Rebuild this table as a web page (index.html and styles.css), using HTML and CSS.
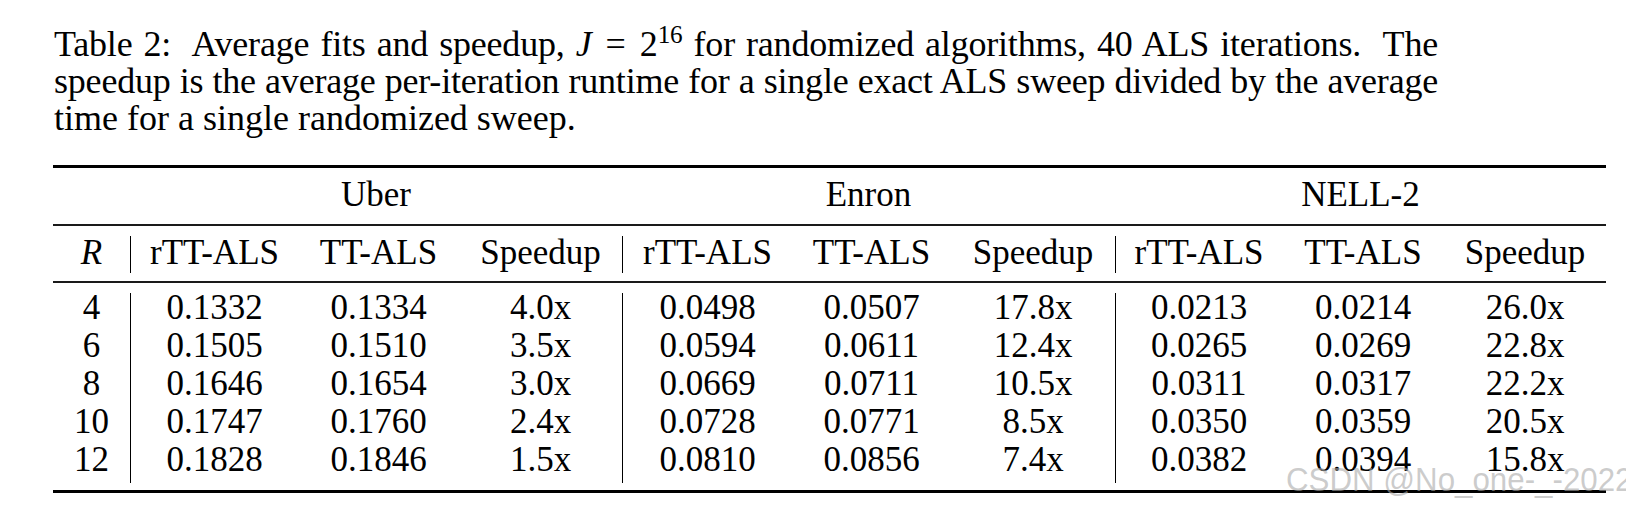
FILE: index.html
```html
<!DOCTYPE html>
<html lang="en">
<head>
<meta charset="utf-8">
<title>Table 2</title>
<link rel="stylesheet" href="styles.css">
</head>
<body>
<div class="page">
  <div class="caption">
    <div class="line">Table 2:&nbsp; Average fits and speedup, <span class="math">J</span> <span class="op">=</span> 2<sup class="sup">16</sup> for randomized algorithms, 40 ALS iterations.&nbsp; The</div>
    <div class="line">speedup is the average per-iteration runtime for a single exact ALS sweep divided by the average</div>
    <div class="line last">time for a single randomized sweep.</div>
  </div>

  <div class="table">
    <div class="rule heavy"></div>

    <div class="cell group"></div>
    <div class="cell group span3">Uber</div>
    <div class="cell group span3">Enron</div>
    <div class="cell group span3">NELL-2</div>

    <div class="rule light after-group"></div>

    <div class="cell head"><span class="math">R</span></div>
    <div class="cell head sep">rTT-ALS</div>
    <div class="cell head">TT-ALS</div>
    <div class="cell head">Speedup</div>
    <div class="cell head sep">rTT-ALS</div>
    <div class="cell head">TT-ALS</div>
    <div class="cell head">Speedup</div>
    <div class="cell head sep">rTT-ALS</div>
    <div class="cell head">TT-ALS</div>
    <div class="cell head">Speedup</div>

    <div class="rule light after-head"></div>

    <div class="cell data">4</div>
    <div class="cell data sep">0.1332</div>
    <div class="cell data">0.1334</div>
    <div class="cell data">4.0x</div>
    <div class="cell data sep">0.0498</div>
    <div class="cell data">0.0507</div>
    <div class="cell data">17.8x</div>
    <div class="cell data sep">0.0213</div>
    <div class="cell data">0.0214</div>
    <div class="cell data">26.0x</div>

    <div class="cell data">6</div>
    <div class="cell data sep">0.1505</div>
    <div class="cell data">0.1510</div>
    <div class="cell data">3.5x</div>
    <div class="cell data sep">0.0594</div>
    <div class="cell data">0.0611</div>
    <div class="cell data">12.4x</div>
    <div class="cell data sep">0.0265</div>
    <div class="cell data">0.0269</div>
    <div class="cell data">22.8x</div>

    <div class="cell data">8</div>
    <div class="cell data sep">0.1646</div>
    <div class="cell data">0.1654</div>
    <div class="cell data">3.0x</div>
    <div class="cell data sep">0.0669</div>
    <div class="cell data">0.0711</div>
    <div class="cell data">10.5x</div>
    <div class="cell data sep">0.0311</div>
    <div class="cell data">0.0317</div>
    <div class="cell data">22.2x</div>

    <div class="cell data">10</div>
    <div class="cell data sep">0.1747</div>
    <div class="cell data">0.1760</div>
    <div class="cell data">2.4x</div>
    <div class="cell data sep">0.0728</div>
    <div class="cell data">0.0771</div>
    <div class="cell data">8.5x</div>
    <div class="cell data sep">0.0350</div>
    <div class="cell data">0.0359</div>
    <div class="cell data">20.5x</div>

    <div class="cell data">12</div>
    <div class="cell data sep">0.1828</div>
    <div class="cell data">0.1846</div>
    <div class="cell data">1.5x</div>
    <div class="cell data sep">0.0810</div>
    <div class="cell data">0.0856</div>
    <div class="cell data">7.4x</div>
    <div class="cell data sep">0.0382</div>
    <div class="cell data">0.0394</div>
    <div class="cell data">15.8x</div>

    <div class="rule heavy bottom"></div>
  </div>

  <div class="watermark">CSDN @No_one-_-2022</div>
</div>
</body>
</html>
```

FILE: styles.css
```css
html, body {
  margin: 0;
  padding: 0;
  background: #ffffff;
  overflow: hidden;
}

.page {
  position: relative;
  width: 1626px;
  height: 510px;
  box-sizing: border-box;
  padding: 26px 0 0 53px;
  font-family: "Liberation Serif", "Times New Roman", serif;
  color: #000000;
}

.caption {
  width: 1384px;
  margin-left: 1px;
  font-size: 36px;
  line-height: 37px;
}

.caption .line {
  white-space: nowrap;
  text-align: justify;
  text-align-last: justify;
  letter-spacing: -0.2px;
}

.caption .line.last {
  text-align-last: left;
  letter-spacing: normal;
}

.math {
  font-style: italic;
}

.op {
  padding: 0 3px;
}

.sup {
  font-size: 0.7em;
  line-height: 0;
  vertical-align: 0.5em;
}

.table {
  display: grid;
  grid-template-columns: 77px 168px 161px 163px 170px 159px 164px 167px 162px 162px;
  margin-top: 28px;
  font-size: 35px;
}

.rule {
  grid-column: 1 / -1;
  background: #000000;
}

.rule.heavy {
  height: 3px;
}

.rule.light {
  height: 2px;
  background: #1a1a1a;
}

.rule.after-group {
  margin-bottom: 10px;
}

.rule.after-head {
  margin-top: 8px;
  margin-bottom: 10px;
}

.rule.bottom {
  margin-top: 7px;
}

.cell {
  text-align: center;
  box-sizing: border-box;
  white-space: nowrap;
}

.group {
  height: 56px;
  padding-top: 8px;
  line-height: 38px;
}

.span3 {
  grid-column: span 3;
}

.head {
  height: 37px;
  line-height: 33px;
}

.data {
  height: 38px;
  line-height: 30px;
}

.sep {
  border-left: 1px solid #000000;
}

.watermark {
  position: absolute;
  left: 1286px;
  top: 462px;
  font-family: "Liberation Sans", Arial, sans-serif;
  font-size: 34px;
  line-height: 34px;
  color: rgba(170, 170, 170, 0.6);
  white-space: nowrap;
  transform: scaleX(0.92);
  transform-origin: left center;
}
```
